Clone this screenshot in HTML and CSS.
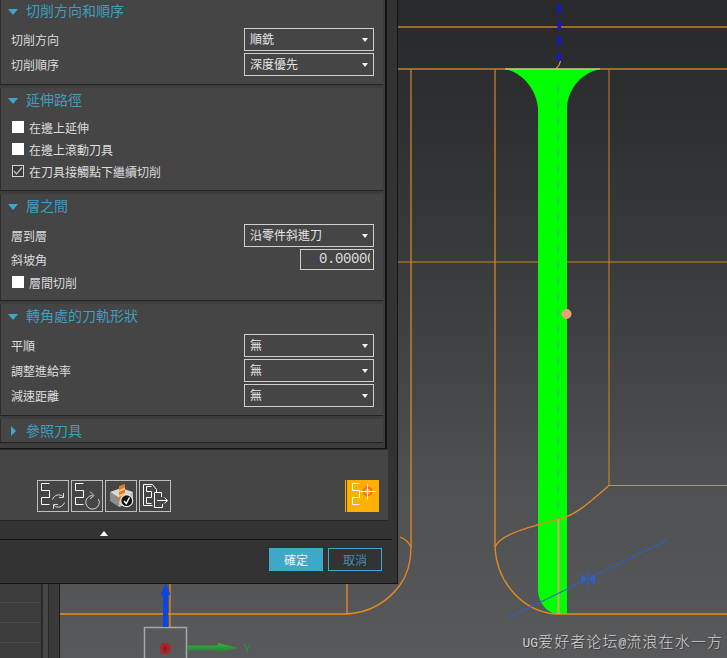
FILE: index.html
```html
<!DOCTYPE html>
<html lang="zh-Hant">
<head>
<meta charset="utf-8">
<title>切削參數</title>
<link rel="stylesheet" href="styles.css">
</head>
<body>
<div class="app">
  <aside class="side">
    <div class="tree">
      <div class="tree-top"></div>
      <div class="tree-row"></div>
      <div class="tree-row"></div>
      <div class="tree-row"></div>
    </div>
    <div class="rail"></div>
    <div class="rail rail-b"></div>
  </aside>
  <main class="viewport">
    <svg class="scene" viewBox="60 0 667 658" aria-hidden="true">
      <defs>
        <linearGradient id="edgeTone" gradientUnits="userSpaceOnUse" x1="0" y1="0" x2="0" y2="658">
          <stop offset="0" stop-color="#bc7d2e"/>
          <stop offset="0.4" stop-color="#cf8429"/>
          <stop offset="1" stop-color="#ee8c1c"/>
        </linearGradient>
        <linearGradient id="arrowTone" gradientUnits="userSpaceOnUse" x1="0" y1="643" x2="0" y2="653">
          <stop offset="0" stop-color="#3fae4c"/>
          <stop offset="1" stop-color="#1f7a2c"/>
        </linearGradient>
      </defs>
      <g class="edge">
        <path d="M397 27H727"/>
        <path d="M397 69H727"/>
        <path d="M397 262H727" class="thin"/>
        <path d="M411 69V547"/>
        <path d="M495 69V547"/>
        <path d="M609 69V485.500" class="thin"/>
        <path d="M609 485.500H727" class="thin"/>
        <path d="M400 537Q408 540 411 547Q411 570 400 585"/>
        <path d="M60 614H347V583"/>
        <path d="M347 614Q380 612 400 585"/>
        <path d="M170 583V628"/>
      </g>
      <path class="toolpath" d="M505 69H600C582 73 568 88 567 108V614H556C546 612 538 602 538 590V108C536 88 522 73 505 69Z"/>
      <path class="centerline" d="M558 85V520"/>
      <g class="edge">
        <path d="M495 547C500 534 530 527 559 519C575 516 590 502 609 485.500"/>
        <path d="M495 547C497 585 525 612 556 614H727"/>
      </g>
      <path class="yellow" d="M559 519V614"/>
      <path class="pale" d="M558 519V614"/>
      <path class="lead" d="M559.300 0V62"/>
      <path class="approach" d="M560.500 61C560 65 558 67 556 69"/>
      <path class="white-top" d="M505 69H600"/>
      <path class="axis" d="M508 618L667 540"/>
      <path class="axis" d="M588 570V588"/>
      <path class="axis-fill" d="M581 574L587 579L581 585ZM595 574L589 579L595 585Z"/>
      <circle class="dot" cx="566.500" cy="314" r="5"/>
      <path class="gizmo-box" d="M144.500 658V627.500H186.500V658"/>
      <path class="arrow-z" d="M163 627V595H160.500L165.500 583L170.500 595H168V627Z"/>
      <path class="arrow-y" d="M187 645.500H218V643L238 648L218 653V650.500H187Z"/>
      <path class="origin" d="M162 643H168L171 647V651L168 654H162L160 651V647Z"/>
      <path class="origin-x" d="M163 649L165 646L167 649L165 652Z"/>
      <text class="axis-label" x="243" y="653">Y</text>
    </svg>
    <div class="watermark"><span class="latin">UG</span>爱好者论坛<span class="latin">@</span>流浪在水一方</div>
  </main>

  <section class="dialog">
    <div class="frame">
      <div class="group group-first">
        <h2 class="group-title"><span class="tri-down"></span>切削方向和順序</h2>
        <div class="fields">
          <div class="field"><span>切削方向</span><div class="select">順銑</div></div>
          <div class="field"><span>切削順序</span><div class="select">深度優先</div></div>
        </div>
      </div>
      <div class="group">
        <h2 class="group-title"><span class="tri-down"></span>延伸路徑</h2>
        <div class="checks">
          <label class="check"><span class="box"></span>在邊上延伸</label>
          <label class="check"><span class="box"></span>在邊上滾動刀具</label>
          <label class="check">
            <span class="box box-on"><svg viewBox="0 0 10 10"><path d="M1 5L3.500 8L9 1.500"/></svg></span>在刀具接觸點下繼續切削
          </label>
        </div>
      </div>
      <div class="group">
        <h2 class="group-title"><span class="tri-down"></span>層之間</h2>
        <div class="fields">
          <div class="field"><span>層到層</span><div class="select">沿零件斜進刀</div></div>
          <div class="field"><span>斜坡角</span><div class="input"><span>0.00000</span></div></div>
          <label class="check check-inline"><span class="box"></span>層間切削</label>
        </div>
      </div>
      <div class="group">
        <h2 class="group-title"><span class="tri-down"></span>轉角處的刀軌形狀</h2>
        <div class="fields">
          <div class="field"><span>平順</span><div class="select">無</div></div>
          <div class="field"><span>調整進給率</span><div class="select">無</div></div>
          <div class="field"><span>減速距離</span><div class="select">無</div></div>
        </div>
      </div>
      <div class="group group-closed">
        <h2 class="group-title"><span class="tri-right"></span>參照刀具</h2>
      </div>
    </div>

    <div class="tools">
      <div class="tool-set">
        <button class="tool" type="button">
          <svg viewBox="1 1 30 30">
            <path class="w" d="M12.500 3.500H4.500V10.500H12.500V17.500H4.500V24.500H12.500"/>
            <path class="g" d="M15.500 19.500A6.500 6.500 0 0 1 26 16.500M27.500 22.500A6.500 6.500 0 0 1 17 25.500"/>
            <path class="g" d="M26.500 13V17.500H22M16.500 29V24.500H21"/>
          </svg>
        </button>
        <button class="tool" type="button">
          <svg viewBox="1 1 30 30">
            <path class="w" d="M12.500 3.500H4.500V10.500H12.500V17.500H4.500V24.500H12.500"/>
            <path class="g" d="M27.500 19A6.800 6.800 0 1 1 21.500 15.500"/>
            <path class="g" d="M19 11.500L23 15.500L19 19"/>
          </svg>
        </button>
        <button class="tool" type="button">
          <svg viewBox="1 1 30 30">
            <path class="block-top" d="M5 12L16 8L28 12L26 16L14 18Z"/>
            <path class="block-side" d="M5 12L14 18V27L5 21Z"/>
            <path class="block-front" d="M14 18L28 13V22L14 27Z"/>
            <path class="drill" d="M14 6L20 4V19L14 21Z"/>
            <path class="drill-band" d="M14 10L20 7.500V9.500L14 12ZM14 15L20 12.500V14.500L14 17Z"/>
            <circle class="badge" cx="21.700" cy="20.700" r="6"/>
            <path class="badge-tick" d="M19 21L21.300 23.500L24.500 17.500"/>
          </svg>
        </button>
        <button class="tool" type="button">
          <svg viewBox="1 1 30 30">
            <path class="w" d="M13.500 4.500H4.500V25.500H13.500M13.500 4.500L17.500 9.500V12"/>
            <path class="w" d="M12.500 6.500H7.500V11.500H12.500V17.500H7.500V23.500H12.500"/>
            <path class="w" d="M15.500 12.500H22.500V17M15.500 12.500V27.500H23.500V24"/>
            <path class="w" d="M18 20.500H28.500M25.500 17.500L28.500 20.500L25.500 23.500"/>
          </svg>
        </button>
      </div>
      <button class="tool-active" type="button">
        <svg viewBox="0 0 32 32">
          <circle class="target" cx="20.500" cy="11.500" r="4"/>
          <path class="w" d="M12.500 3.500H5.500V10.500H12.500V17.500H5.500V24.500H12.500"/>
          <path class="w" d="M13.500 11.500H28.500M20.500 3.500V19.500"/>
        </svg>
      </button>
    </div>

    <div class="collapse"><span class="tri-up"></span></div>

    <div class="footer">
      <button class="btn btn-ok" type="button">確定</button>
      <button class="btn btn-cancel" type="button">取消</button>
    </div>
  </section>
</div>
</body>
</html>
```

FILE: styles.css
```css
* {
  box-sizing: border-box;
}

html,
body {
  margin: 0;
  padding: 0;
  background: #58595b;
}

.app {
  position: relative;
  display: flex;
  width: 727px;
  height: 658px;
  overflow: hidden;
  font-family: "Noto Sans CJK TC", "Noto Sans", sans-serif;
  font-size: 12px;
  color: #dcdcdc;
}

/* left side strip */
.side {
  display: flex;
  flex: none;
  width: 60px;
  height: 100%;
  background: #333;
}

.tree {
  display: flex;
  flex-direction: column;
  justify-content: flex-end;
  width: 43px;
  border-right: 2px solid #2a2a2a;
  background: #3c3c3c;
}

.tree-top {
  flex: 1;
}

.tree-row {
  flex: none;
  height: 20px;
  border-top: 1px solid #484848;
}

.tree-row:last-child {
  height: 16px;
}

.rail {
  width: 6px;
  border-right: 1px solid #262626;
  background: #464646;
}

.rail-b {
  flex: 1;
  border-right: 1px solid #1c1c1c;
  background: #3a3a3a;
}

/* 3D viewport */
.viewport {
  position: relative;
  flex: 1;
  background: linear-gradient(180deg, #27292b 0%, #2f3032 20%, #3f4042 50%, #505153 75%, #58595b 100%);
}

.scene {
  display: block;
  width: 100%;
  height: 100%;
  fill: none;
}

.edge {
  fill: none;
  stroke: url(#edgeTone);
  stroke-width: 1.300;
}

.edge .thin {
  stroke-width: 1;
}

.toolpath {
  fill: #00ff00;
}

.centerline {
  stroke: #2fb47a;
  stroke-width: 1;
  stroke-dasharray: 8 8;
}

.yellow {
  stroke: #e8a020;
  stroke-width: 1.200;
}

.pale {
  stroke: #c9a8b8;
  stroke-width: 1;
}

.lead {
  stroke: #1515e0;
  stroke-width: 3.500;
  stroke-dasharray: 8 8;
  stroke-dashoffset: 11;
}

.approach {
  stroke: #e0a020;
  stroke-width: 1.200;
}

.white-top {
  stroke: #d8d8a8;
  stroke-width: 1.200;
}

.axis {
  stroke: #2f5fc8;
  stroke-width: 1.100;
}

.axis-fill {
  fill: #2f5fc8;
}

.dot {
  fill: #e8a274;
}

.gizmo-box {
  stroke: #a8a8a8;
  stroke-width: 1.500;
}

.arrow-z {
  fill: #0a46e6;
}

.arrow-y {
  fill: url(#arrowTone);
}

.origin {
  fill: #a8262a;
}

.origin-x {
  fill: #7a1c20;
}

.axis-label {
  fill: #2c8a3c;
  stroke: none;
  font-family: "Liberation Sans", sans-serif;
  font-size: 13px;
}

.watermark {
  position: absolute;
  right: 4px;
  bottom: 4px;
  font-family: "Noto Sans CJK SC", serif;
  font-size: 15px;
  font-weight: 300;
  line-height: 20px;
  letter-spacing: 1.100px;
  white-space: nowrap;
  color: #d0d0d0;
  text-shadow: 1px 1px 0 #3c3c3c;
}

.latin {
  font-family: "Liberation Mono", monospace;
  font-size: 13px;
  letter-spacing: 0;
}

/* dialog */
.dialog {
  position: absolute;
  top: 0;
  left: 0;
  display: flex;
  flex-direction: column;
  width: 398px;
  height: 584px;
  border-right: 1px solid #141414;
  border-bottom: 1px solid #141414;
  background: #333;
}

.frame {
  display: flex;
  flex: none;
  flex-direction: column;
  gap: 3px;
  width: 387px;
  height: 449px;
  padding-right: 2px;
  border-right: 2px solid #141414;
  border-bottom: 1px solid #141414;
  background: #3d3d3d;
}

.group {
  border-left: 1px solid #2c2c2c;
  border-bottom: 1px solid #222;
  background: #454545;
}

.group-title {
  display: flex;
  align-items: center;
  gap: 8px;
  height: 24px;
  margin: 0;
  padding: 0 0 2px 7px;
  font-size: 14px;
  font-weight: 400;
  color: #3f9dbf;
}

.group-first .group-title {
  height: 22px;
  padding-bottom: 3px;
}

.group-closed .group-title {
  height: 23px;
  padding-left: 10px;
  gap: 10px;
}

.tri-down {
  width: 0;
  height: 0;
  margin-top: 4px;
  border-top: 6px solid #3fa6c8;
  border-right: 5px solid transparent;
  border-left: 5px solid transparent;
}

.tri-right {
  width: 0;
  height: 0;
  margin-top: 3px;
  border-top: 5px solid transparent;
  border-bottom: 5px solid transparent;
  border-left: 5px solid #3fa6c8;
}

.fields {
  display: flex;
  flex-direction: column;
  gap: 2px;
  padding: 6px 9px 8px 10px;
}

.field {
  display: flex;
  align-items: center;
  justify-content: space-between;
}

.select {
  position: relative;
  width: 130px;
  height: 23px;
  padding-left: 5px;
  border: 1px solid #cfcfcf;
  line-height: 20px;
  color: #e4e4e4;
}

.select::after {
  content: "";
  position: absolute;
  top: 9px;
  right: 5px;
  border-top: 4px solid #f2f2f2;
  border-right: 3.500px solid transparent;
  border-left: 3.500px solid transparent;
}

.input {
  display: flex;
  justify-content: flex-end;
  width: 74px;
  height: 21px;
  padding-right: 3px;
  overflow: hidden;
  border: 1px solid #cfcfcf;
  font-family: "Liberation Mono", monospace;
  font-size: 14px;
  line-height: 19px;
  letter-spacing: -0.400px;
}

.input span {
  flex: none;
  width: 51px;
  overflow: hidden;
  text-align: left;
  white-space: nowrap;
}

.checks {
  display: flex;
  flex-direction: column;
  padding: 4px 0 8px 11px;
}

.check {
  display: flex;
  align-items: center;
  gap: 5px;
  height: 22px;
  color: #dcdcdc;
}

.check-inline {
  margin-top: -1px;
  margin-bottom: -1px;
  padding-left: 1px;
}

.box {
  flex: none;
  width: 12px;
  height: 12px;
  background: #fff;
}

.box-on {
  border: 1px solid #d8d8d8;
  background: #3a3a3a;
}

.box-on svg {
  display: block;
  width: 10px;
  height: 10px;
  fill: none;
  stroke: #bcbcbc;
  stroke-width: 1.300;
}

/* tool row */
.tools {
  display: flex;
  flex: none;
  align-items: flex-end;
  justify-content: space-between;
  width: 388px;
  height: 72px;
  margin-top: 0;
  padding: 0 9px 8px 37px;
  border-top: 1px solid #2c2c2c;
  border-bottom: 1px solid #262626;
  background: #454545;
}

.tool-set {
  display: flex;
  gap: 2px;
}

.tool {
  width: 32px;
  height: 32px;
  padding: 0;
  border: 1px solid #bdbdbd;
  background: transparent;
}

.tool svg {
  display: block;
  width: 30px;
  height: 30px;
  fill: none;
}

.tool-active {
  width: 34px;
  height: 32px;
  padding: 0;
  border: 0;
  border-left: 1px solid #ffb000;
  background: linear-gradient(90deg, #454545 0 1px, #ffb000 1px);
}

.tool-active svg {
  display: block;
  width: 32px;
  height: 32px;
  margin-left: 1px;
  fill: none;
}

.w {
  stroke: #fff;
  stroke-width: 1;
  fill: none;
}

.g {
  stroke: #d6d6d6;
  stroke-width: 1;
  fill: none;
}

.target {
  fill: none;
  stroke: #e8731a;
  stroke-width: 2;
}

.block-top {
  fill: #d8d8d8;
}

.block-side {
  fill: #8e8e8e;
}

.block-front {
  fill: #bdbdbd;
}

.drill {
  fill: #e87818;
}

.drill-band {
  fill: #f4c08a;
}

.badge {
  fill: #141414;
  stroke: #e6e6e6;
  stroke-width: 1.200;
}

.badge-tick {
  fill: none;
  stroke: #fff;
  stroke-width: 1.500;
}

/* collapse bar and footer */
.collapse {
  display: flex;
  flex: none;
  align-items: center;
  width: 392px;
  height: 19px;
  padding-left: 100px;
  border-bottom: 1px solid #0e0e0e;
  background: #333;
}

.tri-up {
  width: 0;
  height: 0;
  margin-top: 6px;
  border-right: 4.500px solid transparent;
  border-bottom: 5px solid #fff;
  border-left: 4.500px solid transparent;
}

.footer {
  display: flex;
  flex: 1;
  align-items: flex-start;
  justify-content: flex-end;
  gap: 5px;
  padding: 8px 15px 0 0;
}

.btn {
  width: 54px;
  height: 23px;
  padding: 0;
  border: 1px solid #3fa9c9;
  font-family: inherit;
  font-size: 12px;
  line-height: 20px;
}

.btn-ok {
  background: #3fa9c9;
  color: #f0f0f0;
}

.btn-cancel {
  background: transparent;
  color: #3f8fae;
}
```
